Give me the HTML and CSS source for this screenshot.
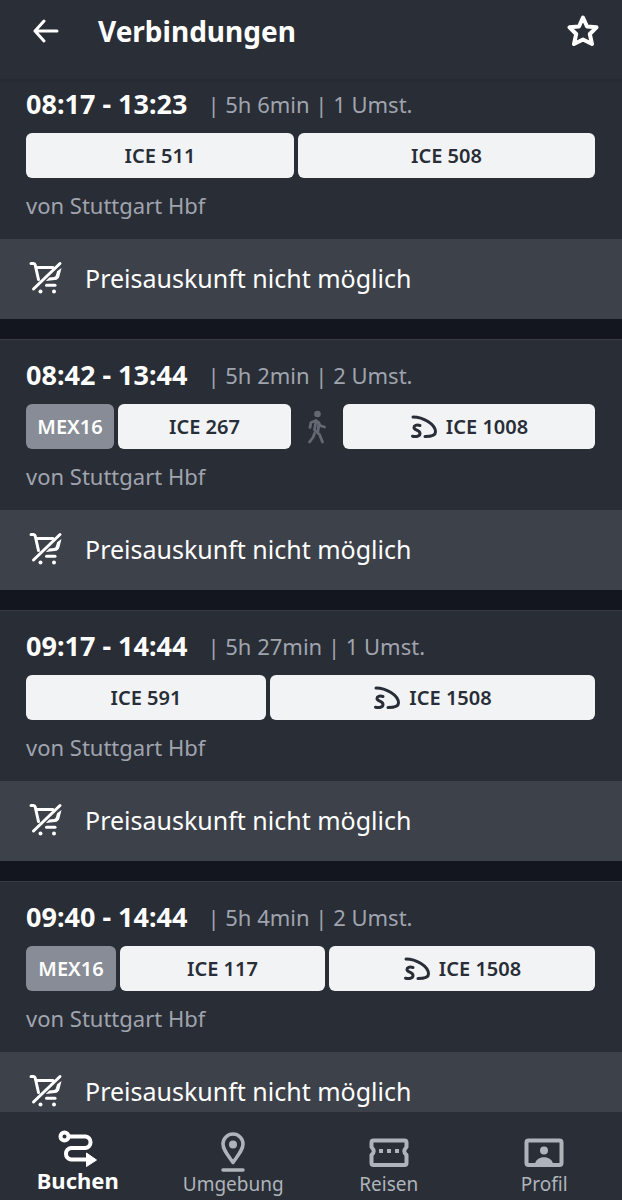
FILE: index.html
```html
<!DOCTYPE html>
<html lang="de">
<head>
<meta charset="utf-8">
<meta name="viewport" content="width=device-width, initial-scale=1">
<title>Verbindungen</title>
<link rel="stylesheet" href="styles.css">
</head>
<body>
<svg class="sprite" aria-hidden="true">
  <symbol id="cart" viewBox="0 0 36 36">
    <g fill="none" stroke="currentColor" stroke-width="3" stroke-linecap="round" stroke-linejoin="round">
      <path d="M4 3.500h2.500q1.300 0 1.700 1.500L11.500 19.500M9 7.500h17"/>
      <path d="M33 3.500 6.500 29"/>
      <path d="M19.500 25.300h8.500"/>
    </g>
    <path fill="currentColor" d="M34.500 8 32.500 16Q31.500 19.700 28 20L18.800 21 22.300 17.600l4.700-.6q1.500-.2 1.900-1.800l1.200-4z"/>
    <circle cx="13.500" cy="31.500" r="2" fill="currentColor"/>
    <circle cx="27" cy="31.500" r="2" fill="currentColor"/>
  </symbol>
  <symbol id="sprinter" viewBox="0 0 28 26">
    <g fill="none" stroke="currentColor" stroke-width="3" stroke-linecap="round" stroke-linejoin="round">
      <path d="M3 3C13 3 25.500 10 25.500 18C25.500 21 23 22.500 15 22.500"/>
      <path d="M10 11.500C6.500 10.500 4 11.500 4 13.500C4 16.500 10 16 10 19.500C10 22.500 6 23 2.500 22.200"/>
    </g>
  </symbol>
  <symbol id="walk" viewBox="0 0 20 34">
    <circle cx="10.500" cy="4" r="3.300" fill="currentColor"/>
    <g fill="none" stroke="currentColor" stroke-width="2.800" stroke-linecap="round" stroke-linejoin="round">
      <path d="M3 17.500 4 12.500 9 10.500 11 12 13 15.500 17.500 17"/>
      <path d="M9 11 7.500 20 12.500 24.500 15.500 32"/>
      <path d="M12 13 11 21"/>
      <path d="M7.500 23.500 6 27.500 2.500 32"/>
    </g>
  </symbol>
</svg>

<div class="app">
  <header class="topbar">
    <button class="icon-button" type="button" aria-label="Zurück">
      <svg class="icon-back" viewBox="0 0 28 24" fill="none" stroke="currentColor" stroke-width="3" stroke-linecap="round" stroke-linejoin="round"><path d="M25 12H3M12 2 3 12l9 10"/></svg>
    </button>
    <h1 class="title">Verbindungen</h1>
    <button class="icon-button" type="button" aria-label="Als Favorit merken">
      <svg class="icon-star" viewBox="0 0 32 32" fill="none" stroke="currentColor" stroke-width="4" stroke-linejoin="round"><path d="M16 2.500 20 11.500 29.500 12.300 22.800 19 25 29 16 24.500 7 29 9.200 19 2.500 12.300 12 11.500Z"/></svg>
    </button>
  </header>

  <main class="list">
    <article class="card">
      <div class="trip">
        <h2 class="summary"><span class="time">08:17 - 13:23</span><span class="meta">| 5h 6min | 1 Umst.</span></h2>
        <div class="legs">
          <span class="leg" style="flex-grow:268">ICE 511</span>
          <span class="leg" style="flex-grow:297">ICE 508</span>
        </div>
        <p class="origin">von Stuttgart Hbf</p>
      </div>
      <p class="price"><svg class="icon-cart" aria-hidden="true"><use href="#cart"/></svg>Preisauskunft nicht möglich</p>
    </article>

    <article class="card">
      <div class="trip">
        <h2 class="summary"><span class="time">08:42 - 13:44</span><span class="meta">| 5h 2min | 2 Umst.</span></h2>
        <div class="legs">
          <span class="leg leg-regional" style="flex-grow:88">MEX16</span>
          <span class="leg" style="flex-grow:173">ICE 267</span>
          <span class="transfer"><svg class="icon-walk" role="img" aria-label="Fußweg"><use href="#walk"/></svg></span>
          <span class="leg" style="flex-grow:252"><svg class="icon-sprinter" aria-hidden="true"><use href="#sprinter"/></svg>ICE 1008</span>
        </div>
        <p class="origin">von Stuttgart Hbf</p>
      </div>
      <p class="price"><svg class="icon-cart" aria-hidden="true"><use href="#cart"/></svg>Preisauskunft nicht möglich</p>
    </article>

    <article class="card">
      <div class="trip">
        <h2 class="summary"><span class="time">09:17 - 14:44</span><span class="meta">| 5h 27min | 1 Umst.</span></h2>
        <div class="legs">
          <span class="leg" style="flex-grow:240">ICE 591</span>
          <span class="leg" style="flex-grow:325"><svg class="icon-sprinter" aria-hidden="true"><use href="#sprinter"/></svg>ICE 1508</span>
        </div>
        <p class="origin">von Stuttgart Hbf</p>
      </div>
      <p class="price"><svg class="icon-cart" aria-hidden="true"><use href="#cart"/></svg>Preisauskunft nicht möglich</p>
    </article>

    <article class="card">
      <div class="trip">
        <h2 class="summary"><span class="time">09:40 - 14:44</span><span class="meta">| 5h 4min | 2 Umst.</span></h2>
        <div class="legs">
          <span class="leg leg-regional" style="flex-grow:90">MEX16</span>
          <span class="leg" style="flex-grow:205">ICE 117</span>
          <span class="leg" style="flex-grow:266"><svg class="icon-sprinter" aria-hidden="true"><use href="#sprinter"/></svg>ICE 1508</span>
        </div>
        <p class="origin">von Stuttgart Hbf</p>
      </div>
      <p class="price"><svg class="icon-cart" aria-hidden="true"><use href="#cart"/></svg>Preisauskunft nicht möglich</p>
    </article>
  </main>

  <nav class="tabs" aria-label="Hauptnavigation">
    <a class="tab tab-active" href="#buchen" aria-current="page">
      <svg class="icon-tab" viewBox="0 0 40 40" fill="none" stroke="currentColor" stroke-width="4"><circle cx="6.500" cy="8.500" r="4"/><path d="M11 8.500H27.500a5.800 5.800 0 0 1 0 11.500H13a5.800 5.800 0 0 0 0 11.500H30"/><path d="M28.500 25 38.500 32 28.500 38.500Z" fill="currentColor" stroke-width="1"/></svg>
      Buchen
    </a>
    <a class="tab" href="#umgebung">
      <svg class="icon-tab" viewBox="0 0 40 40" fill="none" stroke="currentColor" stroke-width="3.500"><path d="M20 30.500C14 22 10 17.500 10 12a10 10 0 0 1 20 0C30 17.500 26 22 20 30.500Z" stroke-linejoin="round"/><circle cx="20" cy="12.500" r="4" fill="currentColor" stroke="none"/><path d="M10 38H30" stroke-linecap="round"/></svg>
      Umgebung
    </a>
    <a class="tab" href="#reisen">
      <svg class="icon-tab" viewBox="0 0 40 40" fill="none" stroke="currentColor" stroke-width="4"><path d="M4.500 8.500h31q2 0 2 2v4.500c-3 3.500-3 5 0 8v8q0 2-2 2h-31q-2 0-2-2v-8c3-3 3-4.500 0-8v-4.500q0-2 2-2Z" stroke-linejoin="round"/><path d="M10 19h20" stroke-dasharray="4 4"/></svg>
      Reisen
    </a>
    <a class="tab" href="#profil">
      <svg class="icon-tab" viewBox="0 0 40 40" fill="none" stroke="currentColor" stroke-width="4"><rect x="2.500" y="8.500" width="35" height="24.500" rx="2"/><circle cx="20" cy="18.500" r="4" fill="currentColor" stroke="none"/><path d="M11 32c1-9 17-9 18 0Z" fill="currentColor" stroke="none"/></svg>
      Profil
    </a>
  </nav>
</div>
</body>
</html>
```
FILE: styles.css
```css
* {
  box-sizing: border-box;
}

body {
  margin: 0;
  background: #13161e;
  color: #fff;
  font-family: "Noto Sans", "Open Sans", sans-serif;
}

h1,
h2,
p {
  margin: 0;
}

.sprite {
  display: none;
}

.app {
  display: flex;
  flex-direction: column;
  height: 100vh;
}

.topbar {
  position: relative;
  z-index: 1;
  display: flex;
  flex: none;
  align-items: center;
  height: 79px;
  padding: 0 23px 18px 30px;
  background: #2a2e37;
  box-shadow: 0 1px 4px rgba(0, 0, 0, 0.15);
}

.icon-button {
  display: flex;
  padding: 0;
  border: 0;
  background: none;
  color: inherit;
}

.icon-back {
  width: 32px;
  height: 24px;
}

.icon-star {
  width: 32px;
  height: 32px;
}

.title {
  flex: 1;
  padding-left: 36px;
  font-size: 28px;
  line-height: 40px;
}

.list {
  display: flex;
  flex: 1;
  flex-direction: column;
  gap: 20px;
  min-height: 0;
  margin-top: -11px;
  overflow: hidden;
}

.card {
  flex: none;
  background: #292d36;
}

.trip {
  padding: 17px 27px 19px 26px;
  border-top: 1px solid #383b44;
}

.summary {
  display: flex;
  align-items: center;
  gap: 20px;
  height: 36px;
  font-size: 27px;
  line-height: 36px;
}

.meta {
  color: #a0a4ae;
  font-size: 22px;
  font-weight: 400;
}

.legs {
  display: flex;
  gap: 4px;
  height: 45px;
  margin: 11px 0 12px;
}

.leg {
  display: flex;
  flex: 1 1 0;
  align-items: center;
  justify-content: center;
  gap: 8px;
  min-width: 0;
  border-radius: 6px;
  background: #f1f3f5;
  color: #282d37;
  font-size: 20px;
  font-weight: 600;
  white-space: nowrap;
}

.leg-regional {
  background: #878c96;
  color: #fff;
}

.transfer {
  display: flex;
  flex: none;
  align-items: center;
  justify-content: center;
  width: 44px;
  color: #646973;
}

.icon-walk {
  width: 20px;
  height: 34px;
}

.icon-sprinter {
  width: 28px;
  height: 26px;
}

.origin {
  color: #a0a4ae;
  font-size: 22px;
  line-height: 30px;
}

.price {
  display: flex;
  align-items: center;
  gap: 22px;
  height: 80px;
  padding: 0 27px 2px;
  background: #3d4149;
  font-size: 25px;
}

.icon-cart {
  width: 36px;
  height: 36px;
}

.tabs {
  display: grid;
  flex: none;
  grid-template-columns: repeat(4, 1fr);
  height: 88px;
  background: #2a2e37;
}

.tab {
  display: flex;
  flex-direction: column;
  align-items: center;
  padding-top: 20px;
  color: #afb4bb;
  font-size: 19px;
  line-height: 24px;
  text-decoration: none;
}

.tab-active {
  padding-top: 16px;
  color: #fff;
  font-size: 22px;
  font-weight: 700;
}

.icon-tab {
  width: 40px;
  height: 40px;
}
```
